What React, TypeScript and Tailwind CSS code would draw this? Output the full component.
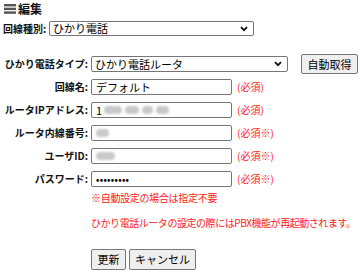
import React from "react";

const font = { fontFamily: '"Noto Sans CJK JP", "Noto Sans", sans-serif' };

function Chevron() {
  return (
    <svg width="8" height="6" viewBox="0 0 8 6" className="shrink-0">
      <path d="M1 1.2 L4 4.2 L7 1.2" fill="none" stroke="#111" strokeWidth="1.8" />
    </svg>
  );
}

function Select({ value, className }: { value: string; className: string }) {
  return (
    <div
      className={`flex items-center justify-between border border-[#767676] rounded-[2px] bg-white pl-[3px] pr-[5px] text-[11px] text-black leading-none ${className}`}
    >
      <span>{value}</span>
      <Chevron />
    </div>
  );
}

function Input({ children }: { children?: React.ReactNode }) {
  return (
    <div className="flex items-center w-[141px] h-[16px] border border-[#767676] rounded-[2px] bg-white pl-[4px] text-[11px] text-black leading-none overflow-hidden whitespace-nowrap">
      {children}
    </div>
  );
}

function Blur({ w }: { w: number }) {
  return <span className="inline-block h-[8px] bg-[#c9c9c9] blur-[1.2px] mr-[3px] rounded-sm" style={{ width: w }} />;
}

function Row({ label, req, children }: { label: string; req: string; children?: React.ReactNode }) {
  return (
    <div className="flex items-center h-[16px]">
      <div className="w-[88px] text-right font-bold text-[10px] leading-none">{label}</div>
      <div className="ml-[3px]">
        <Input>{children}</Input>
      </div>
      <div className="ml-[5px] text-[10px] text-[#ff2020] leading-none">{req}</div>
    </div>
  );
}

function Btn({ children, className }: { children: React.ReactNode; className?: string }) {
  return (
    <div
      className={`flex items-center justify-center border border-[#767676] rounded-[2px] bg-[#efefef] text-[11px] text-black leading-none ${className ?? ""}`}
    >
      {children}
    </div>
  );
}

export default function App() {
  return (
    <div className="w-[364px] h-[275px] bg-white text-[#111] overflow-hidden relative" style={font}>
      <div className="flex items-center h-[16px] pl-[4px] pt-[1px]">
        <svg width="12" height="10" viewBox="0 0 12 10" className="shrink-0">
          <rect x="0" y="0" width="12" height="2.4" fill="#555" />
          <rect x="0" y="3.7" width="12" height="2.4" fill="#555" />
          <rect x="0" y="7.4" width="12" height="2.4" fill="#555" />
        </svg>
        <span className="ml-[2px] font-bold text-[12px] leading-none">編集</span>
      </div>

      <div className="flex items-center mt-[5px] pl-[3px] h-[15px]">
        <span className="font-bold text-[10px] leading-none w-[46px]">回線種別:</span>
        <Select value="ひかり電話" className="w-[205px] h-[15px]" />
      </div>

      <div className="flex items-center mt-[18px] h-[20px]">
        <div className="w-[88px] text-right font-bold text-[10px] leading-none">ひかり電話タイプ:</div>
        <Select value="ひかり電話ルータ" className="ml-[3px] w-[197px] h-[16px]" />
        <Btn className="ml-[13px] w-[57px] h-[20px]">自動取得</Btn>
      </div>

      <div className="flex flex-col gap-[7px] mt-[5px]">
        <Row label="回線名:" req="(必須)">
          <span>デフォルト</span>
        </Row>
        <Row label="ルータIPアドレス:" req="(必須)">
          <span className="mr-[2px]">1</span>
          <Blur w={18} />
          <Blur w={14} />
          <Blur w={11} />
          <Blur w={13} />
        </Row>
        <Row label="ルータ内線番号:" req="(必須※)">
          <Blur w={13} />
        </Row>
        <Row label="ユーザID:" req="(必須※)">
          <Blur w={19} />
        </Row>
        <Row label="パスワード:" req="(必須※)">
          <span className="text-[9px] tracking-[0.3px] font-bold">•••••••••</span>
        </Row>
      </div>

      <div className="pl-[91px] mt-[3px] text-[10px] tracking-[-0.3px] text-[#ff2020] leading-[16px]">※自動設定の場合は指定不要</div>
      <div className="pl-[91px] mt-[9px] text-[10px] tracking-[-0.45px] text-[#ff2020] leading-[16px] whitespace-nowrap">
        ひかり電話ルータの設定の際にはPBX機能が再起動されます。
      </div>

      <div className="flex pl-[91px] mt-[18px] gap-[3px]">
        <Btn className="w-[35px] h-[21px]">更新</Btn>
        <Btn className="w-[67px] h-[21px]">キャンセル</Btn>
      </div>
    </div>
  );
}
